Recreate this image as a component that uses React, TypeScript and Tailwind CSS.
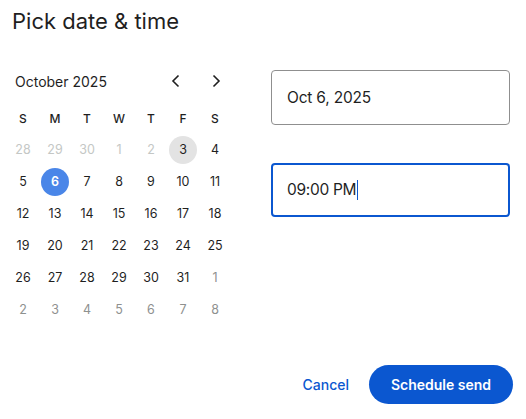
import React from "react";

const font = { fontFamily: "Inter, 'Noto Sans', sans-serif" };

type Day = { d: number; muted?: "light" | "dim"; sel?: boolean; today?: boolean };

const rows: Day[][] = [
  [
    { d: 28, muted: "light" },
    { d: 29, muted: "light" },
    { d: 30, muted: "light" },
    { d: 1, muted: "light" },
    { d: 2, muted: "light" },
    { d: 3, today: true },
    { d: 4 },
  ],
  [{ d: 5 }, { d: 6, sel: true }, { d: 7 }, { d: 8 }, { d: 9 }, { d: 10 }, { d: 11 }],
  [{ d: 12 }, { d: 13 }, { d: 14 }, { d: 15 }, { d: 16 }, { d: 17 }, { d: 18 }],
  [{ d: 19 }, { d: 20 }, { d: 21 }, { d: 22 }, { d: 23 }, { d: 24 }, { d: 25 }],
  [{ d: 26 }, { d: 27 }, { d: 28 }, { d: 29 }, { d: 30 }, { d: 31 }, { d: 1, muted: "dim" }],
  [
    { d: 2, muted: "dim" },
    { d: 3, muted: "dim" },
    { d: 4, muted: "dim" },
    { d: 5, muted: "dim" },
    { d: 6, muted: "dim" },
    { d: 7, muted: "dim" },
    { d: 8, muted: "dim" },
  ],
];

function DayCell({ day }: { day: Day }) {
  let cls = "text-[#1f1f1f]";
  if (day.muted === "light") cls = "text-[#c4c7c5]";
  if (day.muted === "dim") cls = "text-[#8e918f]";
  let circle = "";
  if (day.sel) circle = "bg-[#4a86e8] text-white font-semibold";
  if (day.today) circle = "bg-[#e3e3e3]";
  return (
    <div className="flex h-[32px] w-[32px] items-center justify-center">
      <div
        className={`flex h-[28px] w-[28px] items-center justify-center rounded-full text-[12.5px] ${cls} ${circle}`}
      >
        {day.d}
      </div>
    </div>
  );
}

export default function App() {
  return (
    <div className="relative h-[419px] w-[526px] bg-white" style={font}>
      <div className="pl-[12px] pt-[7px] text-[22px] leading-[28px] text-[#1f1f1f]">
        Pick date &amp; time
      </div>
      <div className="mt-[34px] flex">
        <div className="ml-[7px] w-[224px]">
          <div className="flex h-[24px] items-center">
            <div className="pl-[8px] text-[14px] text-[#1f1f1f]">October 2025</div>
            <div className="ml-auto flex items-center">
              <svg width="24" height="24" viewBox="0 0 24 24" className="mr-[16px]">
                <path d="M14.5 6.5 L9 12 L14.5 17.5" fill="none" stroke="#1f1f1f" strokeWidth="1.6" />
              </svg>
              <svg width="24" height="24" viewBox="0 0 24 24" className="mr-[3px]">
                <path d="M9.5 6.5 L15 12 L9.5 17.5" fill="none" stroke="#1f1f1f" strokeWidth="1.6" />
              </svg>
            </div>
          </div>
          <div className="mt-[10px] grid grid-cols-7">
            {["S", "M", "T", "W", "T", "F", "S"].map((h, i) => (
              <div
                key={i}
                className="flex h-[31px] items-center justify-center text-[12px] font-medium text-[#1f1f1f]"
              >
                {h}
              </div>
            ))}
          </div>
          <div className="flex flex-col">
            {rows.map((r, i) => (
              <div key={i} className="grid grid-cols-7">
                {r.map((d, j) => (
                  <DayCell key={j} day={d} />
                ))}
              </div>
            ))}
          </div>
        </div>
        <div className="ml-[40px] mt-[1px] flex flex-col">
          <div className="flex h-[55px] w-[239px] items-center rounded-[4px] border border-[#8f8f8f] pl-[15px] text-[15.5px] tracking-[-0.2px] text-[#1f1f1f]">
            Oct 6, 2025
          </div>
          <div className="mt-[38px] flex h-[54px] w-[239px] items-center rounded-[4px] border-2 border-[#0b57d0] pl-[14px] text-[15.5px] tracking-[-0.3px] text-[#1f1f1f]">
            <span>09:00 PM</span>
            <span className="ml-[1px] inline-block h-[20px] w-[1px] bg-[#0b57d0]" />
          </div>
        </div>
      </div>
      <div className="absolute bottom-[15px] right-[13px] flex items-center">
        <button className="mr-[20px] text-[14px] font-medium text-[#0b57d0]">Cancel</button>
        <button className="h-[39px] w-[144px] rounded-full bg-[#0b57d0] text-[14px] font-semibold text-white">
          Schedule send
        </button>
      </div>
    </div>
  );
}
